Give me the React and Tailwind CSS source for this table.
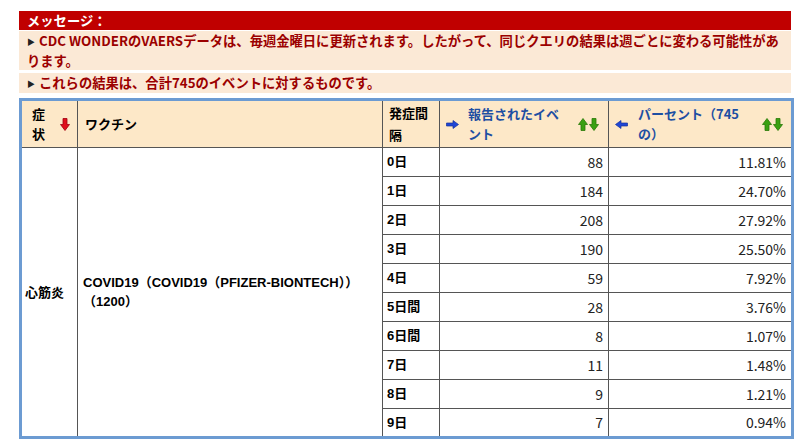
import React from 'react';

const rows = [
  { day: '0日', count: 88, pct: '11.81%' },
  { day: '1日', count: 184, pct: '24.70%' },
  { day: '2日', count: 208, pct: '27.92%' },
  { day: '3日', count: 190, pct: '25.50%' },
  { day: '4日', count: 59, pct: '7.92%' },
  { day: '5日間', count: 28, pct: '3.76%' },
  { day: '6日間', count: 8, pct: '1.07%' },
  { day: '7日', count: 11, pct: '1.48%' },
  { day: '8日', count: 9, pct: '1.21%' },
  { day: '9日', count: 7, pct: '0.94%' },
];

// Sort arrows
const DownArrow = ({ fill, stroke }) => (
  <svg width="10" height="13" viewBox="0 0 10 13">
    <polygon points="3,0.5 7,0.5 7,6.5 9.5,6.5 5,12.5 0.5,6.5 3,6.5" fill={fill} stroke={stroke} strokeWidth="0.8" />
  </svg>
);

const UpArrow = ({ fill, stroke }) => (
  <svg width="10" height="13" viewBox="0 0 10 13">
    <polygon points="5,0.5 9.5,6.5 7,6.5 7,12.5 3,12.5 3,6.5 0.5,6.5" fill={fill} stroke={stroke} strokeWidth="0.8" />
  </svg>
);

const SideArrow = ({ dir }) => (
  <svg width="13" height="9" viewBox="0 0 13 9" className="shrink-0">
    {dir === 'right' ? (
      <polygon points="0.5,3 7,3 7,0.5 12.5,4.5 7,8.5 7,6 0.5,6" fill="#1f46d6" stroke="#16309a" strokeWidth="0.7" />
    ) : (
      <polygon points="12.5,3 6,3 6,0.5 0.5,4.5 6,8.5 6,6 12.5,6" fill="#1f46d6" stroke="#16309a" strokeWidth="0.7" />
    )}
  </svg>
);

const UpDown = () => (
  <div className="flex shrink-0 gap-[1px]">
    <UpArrow fill="#3aa012" stroke="#2a7a08" />
    <DownArrow fill="#3aa012" stroke="#2a7a08" />
  </div>
);

export default function App() {
  const cjk = { fontFamily: '"Noto Sans CJK JP", sans-serif' };
  const mixed = { fontFamily: '"Liberation Sans", "Noto Sans CJK JP", sans-serif' };

  return (
    <div className="w-[809px] h-[447px] bg-white overflow-hidden" style={cjk}>
      <div className="ml-[19px] mt-[11px] w-[772px]">
        {/* Message box */}
        <div className="h-[19px] bg-[#c00000] pl-[8px] text-white font-bold text-[13.3px] leading-[19px]">
          メッセージ：
        </div>
        <div className="mt-[1px] bg-[#fbe9d6] pl-[8px] text-[#9b0000] font-bold text-[13.3px] leading-[19px]">
          <span className="text-[8px] text-[#222] mr-[4px] align-[1px]">▶</span>
          CDC WONDERのVAERSデータは、毎週金曜日に更新されます。したがって、同じクエリの結果は週ごとに変わる可能性があ
          <br />
          ります。
        </div>
        <div className="mt-[3px] bg-[#fbe9d6] pl-[8px] text-[#9b0000] font-bold text-[13.3px] leading-[19px]">
          <span className="text-[8px] text-[#222] mr-[4px] align-[1px]">▶</span>
          これらの結果は、合計745のイベントに対するものです。
        </div>

        {/* Results table */}
        <table className="mt-[5px] w-[772px] table-fixed border-collapse border-[3px] border-[#6c9bd2]">
          <colgroup>
            <col className="w-[57px]" />
            <col className="w-[305px]" />
            <col className="w-[57px]" />
            <col className="w-[169px]" />
            <col className="w-[184px]" />
          </colgroup>
          <thead>
            <tr className="bg-[#fde8c8] text-[13px] font-bold leading-[20px]">
              <th className="h-[48px] border border-[#555] p-0 font-bold text-left">
                <div className="flex items-center justify-between pl-[10px] pr-[7px]">
                  <span className="w-[14px] text-black">症状</span>
                  <DownArrow fill="#e0101c" stroke="#a00010" />
                </div>
              </th>
              <th className="border border-[#555] pl-[7px] font-bold text-left text-black">ワクチン</th>
              <th className="border border-[#555] pl-[6px] pr-[5px] font-bold text-left text-black leading-[22px]">
                発症間隔
              </th>
              <th className="border border-[#555] p-0 font-bold text-left">
                <div className="flex items-center pl-[6px] pr-[9px]">
                  <SideArrow dir="right" />
                  <span className="ml-[9px] w-[100px] text-[#1d4fa3]">報告されたイベント</span>
                  <div className="ml-auto">
                    <UpDown />
                  </div>
                </div>
              </th>
              <th className="border border-[#555] p-0 font-bold text-left">
                <div className="flex items-center pl-[6px] pr-[8px]">
                  <SideArrow dir="left" />
                  <span className="ml-[10px] w-[104px] text-[#1d4fa3]">パーセント（745の）</span>
                  <div className="ml-auto">
                    <UpDown />
                  </div>
                </div>
              </th>
            </tr>
          </thead>
          <tbody className="text-[13px]">
            {rows.map((r, i) => (
              <tr key={r.day}>
                {i === 0 && (
                  <>
                    <td rowSpan={10} className="border border-[#555] pl-[3px] align-middle font-bold text-black">
                      心筋炎
                    </td>
                    <td rowSpan={10} className="border border-[#555] pl-[5px] pr-[4px] align-middle font-bold text-black leading-[19px]" style={mixed}>
                      COVID19（COVID19（PFIZER-BIONTECH））（1200）
                    </td>
                  </>
                )}
                <td className="h-[29px] border border-[#555] pl-[4px] font-bold text-black" style={mixed}>
                  {r.day}
                </td>
                <td className="border border-[#555] pr-[5px] text-right text-[14px] text-[#222]">{r.count}</td>
                <td className="border border-[#555] pr-[5px] text-right text-[14px] text-[#222]">{r.pct}</td>
              </tr>
            ))}
          </tbody>
        </table>
      </div>
    </div>
  );
}
